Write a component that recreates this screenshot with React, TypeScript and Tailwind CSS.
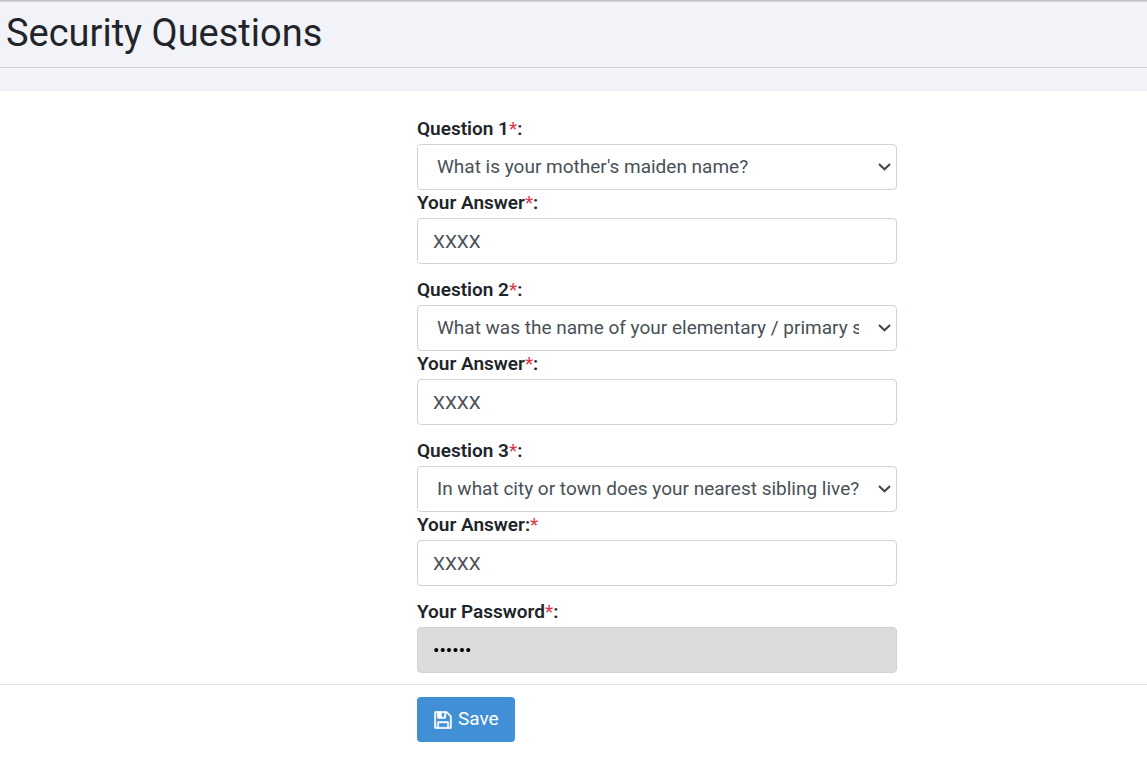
import { useState } from "react";

const questionOptions = [
  "What is your mother's maiden name?",
  "What was the name of your elementary / primary school?",
  "In what city or town does your nearest sibling live?"
];

const fieldClass =
  "block h-[46px] w-full rounded border border-[#ced4da] bg-white text-[19px] text-[#495057] outline-none focus:border-[#4190d5]";

function Required() {
  return <span className="font-normal text-[#dc3545]">*</span>;
}

function FieldLabel({ htmlFor, text, colonFirst = false }: { htmlFor: string; text: string; colonFirst?: boolean }) {
  return (
    <label htmlFor={htmlFor} className="block h-7 text-[19px] leading-[26px] font-semibold text-[#212529]">
      {text}
      {colonFirst ? ":" : null}
      <Required />
      {colonFirst ? null : ":"}
    </label>
  );
}

function QuestionSelect({ id, value, onChange }: { id: string; value: string; onChange: (value: string) => void }) {
  return (
    <div className="relative">
      <select
        id={id}
        value={value}
        onChange={(event) => onChange(event.target.value)}
        className={`${fieldClass} appearance-none pr-[37px] pl-[19px]`}
      >
        {questionOptions.map((option) => (
          <option key={option}>{option}</option>
        ))}
      </select>
      <svg
        className="pointer-events-none absolute top-[18px] right-[6px] h-[10px] w-[13px]"
        viewBox="0 0 13 10"
        fill="none"
        stroke="#41464b"
        strokeWidth="2"
        aria-hidden="true"
      >
        <path d="M1 2 6.500 7.300 12 2" />
      </svg>
    </div>
  );
}

function QuestionGroup({ number, initial, colonFirst }: { number: number; initial: string; colonFirst?: boolean }) {
  const [question, setQuestion] = useState(initial);
  const [answer, setAnswer] = useState("XXXX");

  return (
    <div>
      <FieldLabel htmlFor={`question-${number}`} text={`Question ${number}`} />
      <QuestionSelect id={`question-${number}`} value={question} onChange={setQuestion} />
      <FieldLabel htmlFor={`answer-${number}`} text="Your Answer" colonFirst={colonFirst} />
      <input
        id={`answer-${number}`}
        type="text"
        value={answer}
        onChange={(event) => setAnswer(event.target.value)}
        className={`${fieldClass} px-[15px]`}
      />
    </div>
  );
}

function SaveIcon() {
  return (
    <svg
      className="size-[18px]"
      viewBox="-32 96 1600 1600"
      fill="currentColor"
      stroke="currentColor"
      strokeWidth="40"
      aria-hidden="true"
    >
      <path d="M384 1536h768v-384H384v384zm896 0h128V640q0-14-10-38.500T1378 567l-281-281q-10-10-34-20t-39-10v416q0 40-28 68t-68 28H352q-40 0-68-28t-28-68V256H128v1280h128v-416q0-40 28-68t68-28h832q40 0 68 28t28 68v416zM896 608V288q0-13-9.500-22.500T864 256H672q-13 0-22.500 9.500T640 288v320q0 13 9.500 22.500T672 640h192q13 0 22.500-9.500T896 608zm640 32v928q0 40-28 68t-68 28H96q-40 0-68-28t-28-68V224q0-40 28-68t68-28h928q40 0 88 20t76 48l280 280q28 28 48 76t20 88z" />
    </svg>
  );
}

export default function App() {
  const [password, setPassword] = useState("secret");

  return (
    <div className="min-h-screen bg-white font-['Roboto','Liberation_Sans',sans-serif]">
      <header className="border-y border-b-[#e9ebee] border-t-[#bfc0c5] bg-[#f2f3f8] pb-[22px] shadow-[inset_0_2px_1px_-1px_#d5d6da]">
        <div className="border-b border-[#d2d4d9] px-[6px] pt-2 pb-[10px]">
          <h1 className="text-[38px] leading-12 font-normal text-[#212529]">Security Questions</h1>
        </div>
      </header>

      <form onSubmit={(event) => event.preventDefault()}>
        <div className="grid grid-cols-[417fr_480fr_250fr] pt-[25px] pb-[11px]">
          <div className="col-start-2 flex flex-col gap-[13px]">
            <QuestionGroup number={1} initial={questionOptions[0]} />
            <QuestionGroup number={2} initial={questionOptions[1]} />
            <QuestionGroup number={3} initial={questionOptions[2]} colonFirst />
            <div>
              <FieldLabel htmlFor="password" text="Your Password" />
              <input
                id="password"
                type="password"
                value={password}
                onChange={(event) => setPassword(event.target.value)}
                className="block h-[46px] w-full rounded border border-[#ced4da] bg-[#dcdcdc] px-[15px] text-[19px] text-black outline-none"
              />
            </div>
          </div>
        </div>

        <div className="grid grid-cols-[417fr_480fr_250fr] border-t border-[#e2e3e5] py-3">
          <div className="col-start-2">
            <button
              type="submit"
              className="flex h-[45px] items-center gap-[6px] rounded bg-[#4190d5] pr-4 pl-[17px] text-[19px] text-white hover:bg-[#327fc3]"
            >
              <SaveIcon />
              Save
            </button>
          </div>
        </div>
      </form>
    </div>
  );
}
